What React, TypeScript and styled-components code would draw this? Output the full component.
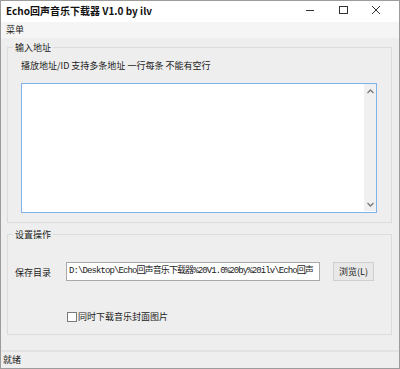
import React, { useState } from "react"
import styled, { createGlobalStyle } from "styled-components"

const GlobalStyle = createGlobalStyle`
  html, body {
    margin: 0;
    padding: 0;
    background: #ffffff;
  }
  body {
    font-family: "Noto Sans CJK SC", "Noto Sans", "Liberation Sans", sans-serif;
    font-size: 9px;
    color: #1a1a1a;
  }
`

const Window = styled.div`
  width: 400px;
  height: 369px;
  box-sizing: border-box;
  border: 1px solid #9c9c9c;
  display: flex;
  flex-direction: column;
  background: #eeeeee;
  overflow: hidden;
`

const TitleBar = styled.div`
  height: 21px;
  background: #ffffff;
  display: flex;
  align-items: center;
  justify-content: space-between;
  padding-left: 5px;
`

const Title = styled.div`
  font-size: 10px;
  font-weight: bold;
  line-height: 12px;
  color: #111;
  margin-top: -2px;
`

const Controls = styled.div`
  display: flex;
  height: 100%;
  align-items: flex-start;
  margin-right: 7px;
`

const ControlButton = styled.div`
  width: 33px;
  height: 17px;
  display: flex;
  align-items: center;
  justify-content: center;
  color: #333;
`

const MenuBar = styled.div`
  height: 16px;
  background: #f5f5f5;
  display: flex;
  align-items: center;
  padding-left: 5px;
  line-height: 12px;
`

const Content = styled.div`
  flex: 1;
  padding: 9px 7px 0 6px;
  display: flex;
  flex-direction: column;
`

const Group = styled.div<{ $height: number; $gap?: number }>`
  position: relative;
  height: ${(p) => p.$height}px;
  box-sizing: border-box;
  border: 1px solid #dcdcdc;
  margin-top: ${(p) => p.$gap ?? 0}px;
`

const GroupLabel = styled.span`
  position: absolute;
  top: -7px;
  left: 5px;
  padding: 0 2px;
  background: #eeeeee;
  line-height: 13px;
  color: #1a1a1a;
`

const InputBody = styled.div`
  padding: 12px 14px 0 13px;
`

const Hint = styled.div`
  line-height: 12px;
  height: 12px;
`

const AddressBox = styled.div`
  margin-top: 11px;
  height: 130px;
  box-sizing: border-box;
  border: 1px solid #7eb4ea;
  background: #ffffff;
  display: flex;
`

const AddressInput = styled.textarea`
  flex: 1;
  border: none;
  outline: none;
  resize: none;
  padding: 2px;
  font: inherit;
  background: transparent;
`

const ScrollBar = styled.div`
  width: 12px;
  margin: 0 0 1px 0;
  background: #f0f0f0;
  display: flex;
  flex-direction: column;
  justify-content: space-between;
  align-items: center;
  padding: 5px 0 4px;
`

const SettingsBody = styled.div`
  padding: 27px 0 0 7px;
  display: flex;
  flex-direction: column;
`

const Row = styled.div`
  display: flex;
  align-items: center;
  height: 19px;
`

const RowLabel = styled.div`
  width: 51px;
  line-height: 12px;
  margin-top: 2px;
`

const PathInput = styled.div`
  width: 254px;
  height: 19px;
  box-sizing: border-box;
  border: 1px solid #a9a9a9;
  background: #ffffff;
  font-family: "Liberation Mono", "Noto Sans CJK SC", monospace;
  font-size: 9px;
  letter-spacing: -0.9px;
  line-height: 17px;
  padding-left: 2px;
  white-space: nowrap;
`

const BrowseButton = styled.button`
  margin-left: 13px;
  width: 41px;
  height: 19px;
  box-sizing: border-box;
  border: 1px solid #cfcfcf;
  background: #e8e8e8;
  font: inherit;
  font-size: 9px;
  padding: 0;
  color: #1a1a1a;
`

const CheckRow = styled.label`
  display: flex;
  align-items: center;
  margin: 30px 0 0 52px;
  line-height: 12px;
`

const CheckBox = styled.span`
  width: 10px;
  height: 10px;
  box-sizing: border-box;
  border: 1px solid #7a7a7a;
  background: #ffffff;
  margin-right: 1px;
  display: flex;
  align-items: center;
  justify-content: center;
`

const StatusBar = styled.div`
  height: 16px;
  border-top: 2px solid #e2e2e2;
  display: flex;
  align-items: center;
  padding-left: 2px;
  line-height: 12px;
`

const Chevron = ({ up }: { up?: boolean }) => (
  <svg width="7" height="5" viewBox="0 0 7 5">
    <path
      d={up ? "M0.5 4 L3.5 1 L6.5 4" : "M0.5 1 L3.5 4 L6.5 1"}
      fill="none"
      stroke="#7a7a7a"
      strokeWidth="1.3"
    />
  </svg>
)

export default function App() {
  const [urls, setUrls] = useState("")
  const [cover, setCover] = useState(false)

  return (
    <>
      <GlobalStyle />
      <Window>
        <TitleBar>
          <Title>Echo回声音乐下载器 V1.0 by ilv</Title>
          <Controls>
            <ControlButton>
              <svg width="10" height="10" viewBox="0 0 10 10">
                <path d="M1 5.5 H9" stroke="#333" strokeWidth="1" />
              </svg>
            </ControlButton>
            <ControlButton>
              <svg width="10" height="10" viewBox="0 0 10 10">
                <rect x="1.5" y="1.5" width="8" height="7" fill="none" stroke="#333" strokeWidth="1" />
              </svg>
            </ControlButton>
            <ControlButton>
              <svg width="10" height="10" viewBox="0 0 10 10">
                <path d="M1 1 L9 9 M9 1 L1 9" stroke="#333" strokeWidth="1" />
              </svg>
            </ControlButton>
          </Controls>
        </TitleBar>
        <MenuBar>菜单</MenuBar>
        <Content>
          <Group $height={176}>
            <GroupLabel>输入地址</GroupLabel>
            <InputBody>
              <Hint>播放地址/ID 支持多条地址 一行每条 不能有空行</Hint>
              <AddressBox>
                <AddressInput value={urls} onChange={(e) => setUrls(e.target.value)} />
                <ScrollBar>
                  <Chevron up />
                  <Chevron />
                </ScrollBar>
              </AddressBox>
            </InputBody>
          </Group>
          <Group $height={101} $gap={11}>
            <GroupLabel>设置操作</GroupLabel>
            <SettingsBody>
              <Row>
                <RowLabel>保存目录</RowLabel>
                <PathInput>D:\Desktop\Echo回声音乐下载器%20V1.0%20by%20ilv\Echo回声</PathInput>
                <BrowseButton>浏览(L)</BrowseButton>
              </Row>
              <CheckRow onClick={() => setCover(!cover)}>
                <CheckBox>
                  {cover && (
                    <svg width="8" height="8" viewBox="0 0 8 8">
                      <path d="M1 4 L3 6 L7 1.5" fill="none" stroke="#333" strokeWidth="1.2" />
                    </svg>
                  )}
                </CheckBox>
                同时下载音乐封面图片
              </CheckRow>
            </SettingsBody>
          </Group>
        </Content>
        <StatusBar>就绪</StatusBar>
      </Window>
    </>
  )
}
